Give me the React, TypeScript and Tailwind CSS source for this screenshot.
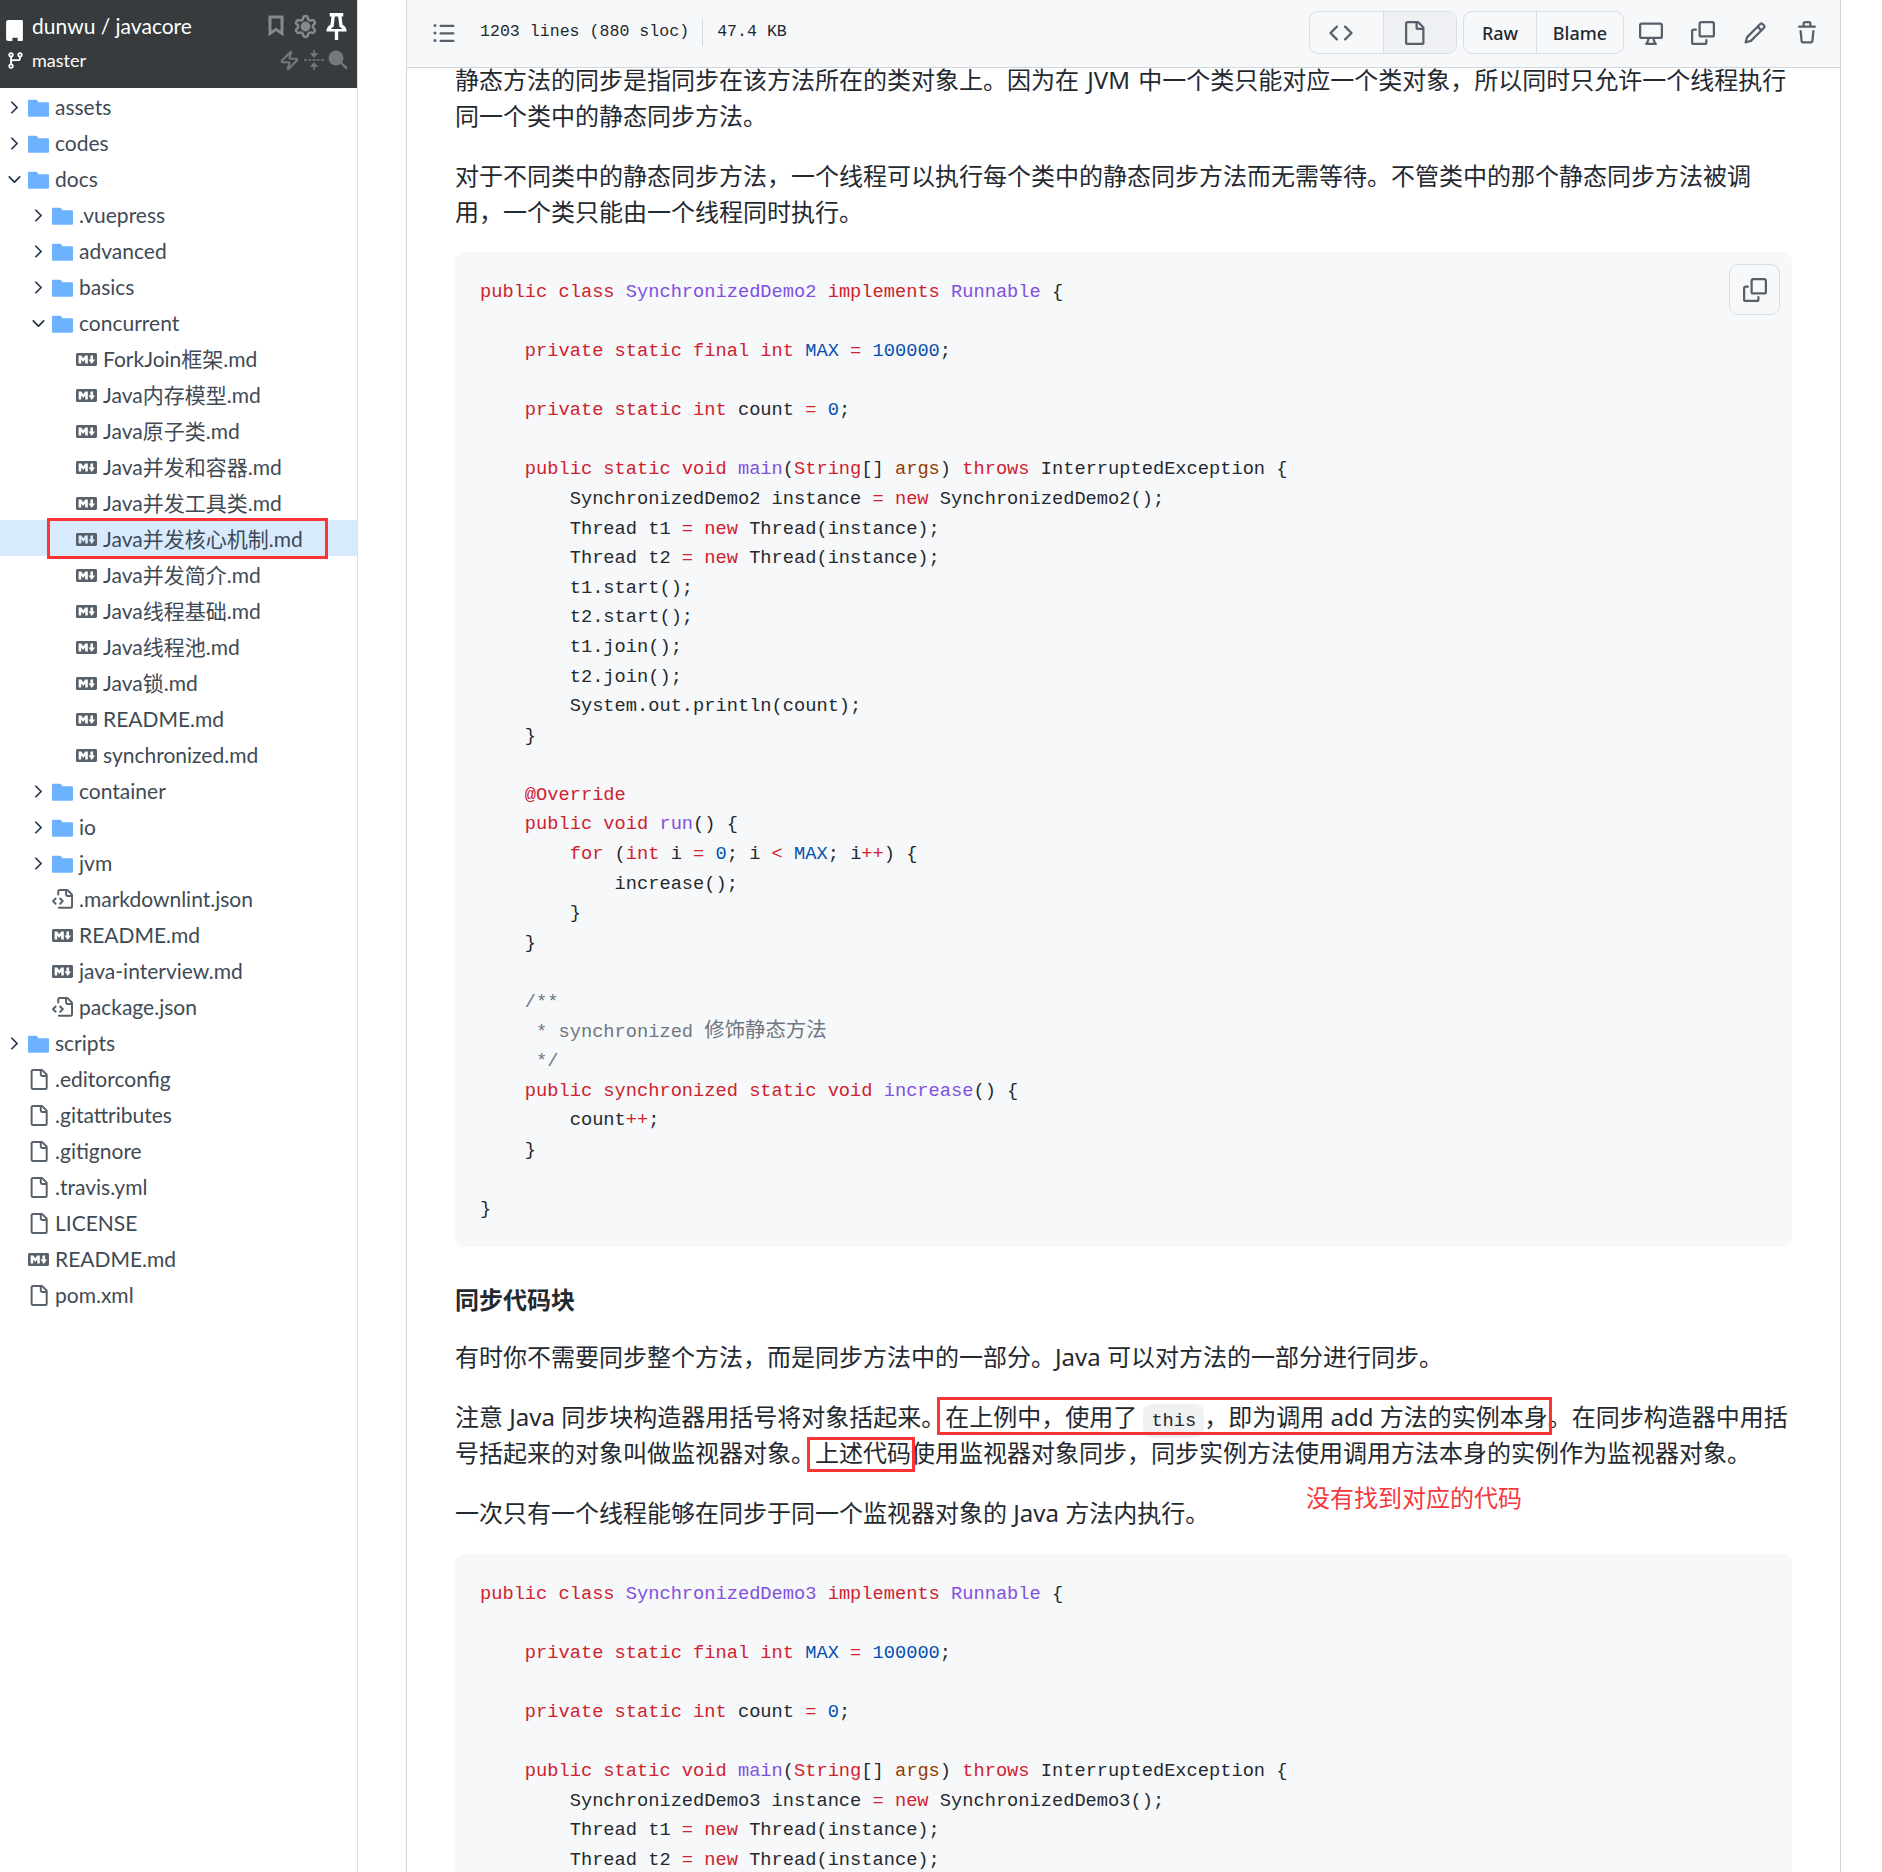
import React from "react";
import { ChevronDown, ChevronRight, Settings, Zap } from "lucide-react";

const uiFont = "font-['Noto_Sans','Noto_Sans_CJK_SC',sans-serif]";
const treeFont = "font-['Lato','Noto_Sans_CJK_SC',sans-serif]";
const monoFont = "font-['Liberation_Mono','Noto_Sans_CJK_SC',monospace]";

type Kind = "folder" | "open" | "md" | "code" | "file";

const tree: [number, Kind, string][] = [
  [0, "folder", "assets"],
  [0, "folder", "codes"],
  [0, "open", "docs"],
  [1, "folder", ".vuepress"],
  [1, "folder", "advanced"],
  [1, "folder", "basics"],
  [1, "open", "concurrent"],
  [2, "md", "ForkJoin框架.md"],
  [2, "md", "Java内存模型.md"],
  [2, "md", "Java原子类.md"],
  [2, "md", "Java并发和容器.md"],
  [2, "md", "Java并发工具类.md"],
  [2, "md", "Java并发核心机制.md"],
  [2, "md", "Java并发简介.md"],
  [2, "md", "Java线程基础.md"],
  [2, "md", "Java线程池.md"],
  [2, "md", "Java锁.md"],
  [2, "md", "README.md"],
  [2, "md", "synchronized.md"],
  [1, "folder", "container"],
  [1, "folder", "io"],
  [1, "folder", "jvm"],
  [1, "code", ".markdownlint.json"],
  [1, "md", "README.md"],
  [1, "md", "java-interview.md"],
  [1, "code", "package.json"],
  [0, "folder", "scripts"],
  [0, "file", ".editorconfig"],
  [0, "file", ".gitattributes"],
  [0, "file", ".gitignore"],
  [0, "file", ".travis.yml"],
  [0, "file", "LICENSE"],
  [0, "md", "README.md"],
  [0, "file", "pom.xml"],
];

// octicons at their 16px grid, the react-icons ones come out too thin
const icons = {
  markdown:
    "M14.85 3H1.15C.52 3 0 3.52 0 4.15v7.69C0 12.48.52 13 1.15 13h13.69c.64 0 1.15-.52 1.15-1.15v-7.7C16 3.52 15.48 3 14.85 3zM9 11H7V8L5.5 9.92 4 8v3H2V5h2l1.5 2L7 5h2v6zm2.99.5L9.5 8H11V5h2v3h1.5l-2.51 3.5z",
  folder: "M1 2h5c.7 0 1 .5 1.2 1L8 4h7c.6 0 1 .4 1 1v9c0 .6-.4 1-1 1H1c-.6 0-1-.4-1-1V3c0-.6.4-1 1-1z",
  file: "M2 1.75C2 .784 2.784 0 3.75 0h6.586c.464 0 .909.184 1.237.513l2.914 2.914c.329.328.513.773.513 1.237v9.586A1.75 1.75 0 0 1 13.25 16h-9.5A1.75 1.75 0 0 1 2 14.25Zm1.75-.25a.25.25 0 0 0-.25.25v12.5c0 .138.112.25.25.25h9.5a.25.25 0 0 0 .25-.25V6h-2.75A1.75 1.75 0 0 1 9 4.25V1.5Zm6.75.062V4.25c0 .138.112.25.25.25h2.688l-.011-.013-2.914-2.914-.013-.011Z",
  fileCode:
    "M4 1.75C4 .784 4.784 0 5.75 0h5.586c.464 0 .909.184 1.237.513l2.914 2.914c.329.328.513.773.513 1.237v8.586A1.75 1.75 0 0 1 14.25 15h-9a.75.75 0 0 1 0-1.5h9a.25.25 0 0 0 .25-.25V6h-2.75A1.75 1.75 0 0 1 10 4.25V1.5H5.75a.25.25 0 0 0-.25.25v2.5a.75.75 0 0 1-1.5 0Zm1.72 4.97a.75.75 0 0 1 1.06 0l2 2a.75.75 0 0 1 0 1.06l-2 2a.749.749 0 0 1-1.275-.326.749.749 0 0 1 .215-.734l1.47-1.47-1.47-1.47a.75.75 0 0 1 0-1.06ZM3.28 7.78 1.81 9.25l1.47 1.47a.751.751 0 0 1-.018 1.042.751.751 0 0 1-1.042.018l-2-2a.75.75 0 0 1 0-1.06l2-2a.751.751 0 0 1 1.042.018.751.751 0 0 1 .018 1.042Zm8.22-6.218V4.25c0 .138.112.25.25.25h2.688l-.011-.013-2.914-2.914-.013-.011Z",
  copy: "M0 6.75C0 5.784.784 5 1.75 5h1.5a.75.75 0 0 1 0 1.5h-1.5a.25.25 0 0 0-.25.25v7.5c0 .138.112.25.25.25h7.5a.25.25 0 0 0 .25-.25v-1.5a.75.75 0 0 1 1.5 0v1.5A1.75 1.75 0 0 1 9.25 16h-7.5A1.75 1.75 0 0 1 0 14.25ZM5 1.75C5 .784 5.784 0 6.75 0h7.5C15.216 0 16 .784 16 1.75v7.5A1.75 1.75 0 0 1 14.25 11h-7.5A1.75 1.75 0 0 1 5 9.25Zm1.75-.25a.25.25 0 0 0-.25.25v7.5c0 .138.112.25.25.25h7.5a.25.25 0 0 0 .25-.25v-7.5a.25.25 0 0 0-.25-.25Z",
  pencil:
    "M11.013 1.427a1.75 1.75 0 0 1 2.474 0l1.086 1.086a1.75 1.75 0 0 1 0 2.474l-8.61 8.61c-.21.21-.47.364-.756.445l-3.251.93a.75.75 0 0 1-.927-.928l.929-3.25c.081-.286.235-.547.445-.758l8.61-8.61Zm.176 4.823L9.75 4.81l-6.286 6.287a.253.253 0 0 0-.064.108l-.558 1.953 1.953-.558a.253.253 0 0 0 .108-.064Zm1.238-3.763a.25.25 0 0 0-.354 0L10.811 3.75l1.439 1.44 1.263-1.263a.25.25 0 0 0 0-.354Z",
  trash:
    "M11 1.75V3h2.25a.75.75 0 0 1 0 1.5H2.75a.75.75 0 0 1 0-1.5H5V1.75C5 .784 5.784 0 6.75 0h2.5C10.216 0 11 .784 11 1.75ZM4.496 6.675l.66 6.6a.25.25 0 0 0 .249.225h5.19a.25.25 0 0 0 .249-.225l.66-6.6a.75.75 0 0 1 1.492.149l-.66 6.6A1.748 1.748 0 0 1 10.595 15h-5.19a1.75 1.75 0 0 1-1.741-1.575l-.66-6.6a.75.75 0 1 1 1.492-.15ZM6.5 1.75V3h3V1.75a.25.25 0 0 0-.25-.25h-2.5a.25.25 0 0 0-.25.25Z",
  desktop:
    "M14.25 1c.966 0 1.75.784 1.75 1.75v7.5A1.75 1.75 0 0 1 14.25 12h-3.727c.099 1.041.52 1.872 1.292 2.757A.75.75 0 0 1 11.25 16h-6.5a.75.75 0 0 1-.565-1.243c.772-.885 1.192-1.716 1.292-2.757H1.75A1.75 1.75 0 0 1 0 10.25v-7.5C0 1.784.784 1 1.75 1ZM1.75 2.5a.25.25 0 0 0-.25.25v7.5c0 .138.112.25.25.25h12.5a.25.25 0 0 0 .25-.25v-7.5a.25.25 0 0 0-.25-.25ZM9.018 12H6.982a5.72 5.72 0 0 1-.765 2.5h3.566a5.72 5.72 0 0 1-.765-2.5Z",
  code: "m11.28 3.22 4.25 4.25a.75.75 0 0 1 0 1.06l-4.25 4.25a.749.749 0 0 1-1.275-.326.749.749 0 0 1 .215-.734L13.94 8l-3.72-3.72a.749.749 0 0 1 .326-1.275.749.749 0 0 1 .734.215Zm-6.56 0a.751.751 0 0 1 1.042.018.751.751 0 0 1 .018 1.042L2.06 8l3.72 3.72a.749.749 0 0 1-.326 1.275.749.749 0 0 1-.734-.215L.47 8.53a.75.75 0 0 1 0-1.06Z",
  list: "M5.75 2.5h8.5a.75.75 0 0 1 0 1.5h-8.5a.75.75 0 0 1 0-1.5Zm0 5h8.5a.75.75 0 0 1 0 1.5h-8.5a.75.75 0 0 1 0-1.5Zm0 5h8.5a.75.75 0 0 1 0 1.5h-8.5a.75.75 0 0 1 0-1.5ZM2 14a1 1 0 1 1 0-2 1 1 0 0 1 0 2Zm1-6a1 1 0 1 1-2 0 1 1 0 0 1 2 0ZM2 4a1 1 0 1 1 0-2 1 1 0 0 1 0 2Z",
  branch:
    "M9.5 3.25a2.25 2.25 0 1 1 3 2.122V6A2.5 2.5 0 0 1 10 8.5H6a1 1 0 0 0-1 1v1.128a2.251 2.251 0 1 1-1.5 0V5.372a2.25 2.25 0 1 1 1.5 0v1.836A2.493 2.493 0 0 1 6 7h4a1 1 0 0 0 1-1v-.628A2.25 2.25 0 0 1 9.5 3.25Zm-6 0a.75.75 0 1 0 1.5 0 .75.75 0 0 0-1.5 0Zm8.25-.75a.75.75 0 1 0 0 1.5.75.75 0 0 0 0-1.5ZM4.25 12a.75.75 0 1 0 0 1.5.75.75 0 0 0 0-1.5Z",
  bookmark: "M3 1h10v14l-5-3.6L3 15zM5 3v8.2l3-2.2 3 2.2V3z",
  pin: "M4 0h8v2h-1l.6 5c1.3.7 2.4 2 2.4 4H9v5H7v-5H2c0-2 1.1-3.3 2.4-4L5 2H4zM7 2l-.7 6.2C5.500 8.600 5 9 4.700 9.500h6.600C11 9 10.500 8.600 9.700 8.200L9 2z",
};

const Oct = ({ d, size = 24, className = "" }: { d: string; size?: number; className?: string }) => (
  <svg viewBox="0 0 16 16" width={size} height={size} fill="currentColor" fillRule="evenodd" className={`shrink-0 ${className}`}>
    <path d={d} />
  </svg>
);

const TreeRow = ({ depth, kind, name }: { depth: number; kind: Kind; name: string }) => {
  const selected = name === "Java并发核心机制.md";
  const pad = depth === 0 ? "pl-0" : depth === 1 ? "pl-[24px]" : "pl-[48px]";
  return (
    <div className={`flex items-center h-9 pt-[3px] text-[21px] text-[#404a55] ${pad} ${selected ? "bg-[#d8ebfe]" : ""}`}>
      <span className="w-[28px] pl-[4px] flex items-center shrink-0 text-[#24364d]">
        {kind === "folder" && <ChevronRight size={21} strokeWidth={2} />}
        {kind === "open" && <ChevronDown size={21} strokeWidth={2} />}
      </span>
      <span className="w-[27px] flex items-center shrink-0">
        {(kind === "folder" || kind === "open") && <Oct d={icons.folder} size={21} className="text-[#6cb2ff]" />}
        {kind === "md" && <Oct d={icons.markdown} size={21} className="text-[#586069]" />}
        {kind === "code" && <Oct d={icons.fileCode} size={21} className="text-[#586069]" />}
        {kind === "file" && <Oct d={icons.file} size={21} className="text-[#586069]" />}
      </span>
      <span className="whitespace-nowrap mb-[2px]">{name}</span>
    </div>
  );
};

const Sidebar = () => (
  <aside className={`w-[358px] shrink-0 border-r border-[#dde1e5] bg-white ${treeFont}`}>
    <div className="h-[88px] bg-[#373b3e] text-white">
      <div className="flex items-center h-[48px] pt-[4px] pl-[6px]">
        <svg viewBox="0 0 16 20" className="w-[17px] h-[21px] mt-[8px]" fill="#fff">
          <path d="M2 0h13a1 1 0 0 1 1 1v18a1 1 0 0 1-1 1h-4v-3H6v3H2a2 2 0 0 1-2-2V2a2 2 0 0 1 2-2z" />
        </svg>
        <span className="ml-[9px] text-[21px] whitespace-nowrap">dunwu / javacore</span>
        <div className="ml-auto mr-[7px] flex items-center gap-[5px]">
          <Oct d={icons.bookmark} size={24} className="text-[#85898c]" />
          <Settings size={25} strokeWidth={2.4} className="text-[#85898c]">
            <circle cx="12" cy="12" r="3.5" fill="currentColor" />
          </Settings>
          <Oct d={icons.pin} size={27} className="text-white" />
        </div>
      </div>
      <div className="flex items-center h-[24px] pl-[6px]">
        <Oct d={icons.branch} size={19} />
        <span className="ml-[7px] text-[18px] whitespace-nowrap">master</span>
        <div className="ml-auto mr-[9px] flex items-center gap-[4px] text-[#74787b]">
          <Zap size={21} strokeWidth={2.4} />
          <svg viewBox="0 0 20 20" className="w-5 h-5" fill="currentColor">
            <path d="M9.200 0h1.600v3H14l-4 5-4-5h3.200zM6 17l4-5 4 5h-3.200v3H9.200v-3zM0 9.300h3v1.400H0zM4.500 9.300h3v1.400h-3zM8.500 9.300h3v1.400h-3zM12.500 9.300h3v1.400h-3zM17 9.300h3v1.400h-3z" />
          </svg>
          <svg viewBox="0 0 20 20" className="w-5 h-5" fill="currentColor">
            <circle cx="8" cy="8" r="7.500" />
            <path d="M12.500 11l7.500 6.500-2 2-7-7z" />
          </svg>
        </div>
      </div>
    </div>
    {tree.map(([depth, kind, name], i) => (
      <TreeRow key={i} depth={depth} kind={kind} name={name} />
    ))}
  </aside>
);

type Token = [string, string?];
const r = "text-[#cf222e]";
const p = "text-[#8250df]";
const b = "text-[#0550ae]";
const o = "text-[#953800]";
const g = "text-[#6e7781]";
const gc = "text-[#6e7781] text-[20.4px]";

const codeLines = (demo: string): Token[][] => [
  [["public class ", r], [demo, p], [" implements ", r], ["Runnable", p], [" {"]],
  [],
  [["    private static final int ", r], ["MAX", b], [" "], ["=", r], [" "], ["100000", b], [";"]],
  [],
  [["    private static int ", r], ["count "], ["=", r], [" "], ["0", b], [";"]],
  [],
  [["    public static void ", r], ["main", p], ["("], ["String", r], ["[] "], ["args", o], [") "], ["throws ", r], ["InterruptedException {"]],
  [["        " + demo + " instance "], ["= new ", r], [demo + "();"]],
  [["        Thread t1 "], ["= new ", r], ["Thread(instance);"]],
  [["        Thread t2 "], ["= new ", r], ["Thread(instance);"]],
  [["        t1.start();"]],
  [["        t2.start();"]],
  [["        t1.join();"]],
  [["        t2.join();"]],
  [["        System.out.println(count);"]],
  [["    }"]],
  [],
  [["    @Override", r]],
  [["    public void ", r], ["run", p], ["() {"]],
  [["        for", r], [" ("], ["int ", r], ["i "], ["=", r], [" "], ["0", b], ["; i "], ["<", r], [" "], ["MAX", b], ["; i"], ["++", r], [") {"]],
  [["            increase();"]],
  [["        }"]],
  [["    }"]],
  [],
  [["    /**", g]],
  [["     * synchronized ", g], ["修饰静态方法", gc]],
  [["     */", g]],
  [["    public synchronized static void ", r], ["increase", p], ["() {"]],
  [["        count"], ["++", r], [";"]],
  [["    }"]],
  [],
  [["}"]],
];

const CodeBlock = ({ demo, copy }: { demo: string; copy?: boolean }) => (
  <div className={`relative bg-[#f6f8fa] rounded-[9px] pt-[26px] pb-[22px] px-6 mb-6 ${monoFont}`}>
    {copy && (
      <div className="absolute top-3 right-3 w-[51px] h-[51px] flex items-center justify-center rounded-[9px] border border-[#d8dee4] bg-[#f6f8fa] text-[#57606a]">
        <Oct d={icons.copy} />
      </div>
    )}
    <pre className="text-[18.7px] leading-[29.58px] text-[#24292f] font-[inherit] pl-px">
      {codeLines(demo).map((line, i) => (
        <div key={i} className="h-[29.58px]">
          {line.map(([text, color], j) => (
            <span key={j} className={color}>
              {text}
            </span>
          ))}
        </div>
      ))}
    </pre>
  </div>
);

const Toolbar = () => (
  <div className="absolute top-0 left-0 right-0 h-[68px] z-10 bg-[#f6f8fa] border-b border-[#d0d7de] flex items-center pb-[2px] text-[#24292f]">
    <Oct d={icons.list} className="ml-[25px] text-[#57606a]" />
    <span className={`ml-[24px] text-[16.6px] ${monoFont}`}>1203 lines (880 sloc)</span>
    <span className="ml-[13px] mr-[14px] w-px h-[27px] bg-[#d0d7de]" />
    <span className={`text-[16.6px] ${monoFont}`}>47.4 KB</span>
    <div className="ml-auto flex items-center">
      <div className="flex h-[43px] w-[148px] rounded-[9px] border border-[#d8dee4] overflow-hidden">
        <div className="w-[73px] pr-[11px] flex items-center justify-center text-[#57606a]">
          <Oct d={icons.code} />
        </div>
        <div className="flex-1 pr-[12px] flex items-center justify-center bg-[#eef0f3] border-l border-[#d8dee4] text-[#57606a]">
          <Oct d={icons.file} />
        </div>
      </div>
      <div className="flex h-[43px] w-[161px] ml-[6px] rounded-[9px] border border-[#d8dee4] text-[18px] font-medium overflow-hidden">
        <div className="w-[72px] pt-[2px] flex items-center justify-center">Raw</div>
        <div className="flex-1 pt-[2px] flex items-center justify-center border-l border-[#d8dee4]">Blame</div>
      </div>
      <div className="flex items-center gap-[28px] ml-[15px] mr-[21px] text-[#57606a]">
        <Oct d={icons.desktop} />
        <Oct d={icons.copy} />
        <Oct d={icons.pencil} />
        <Oct d={icons.trash} />
      </div>
    </div>
  </div>
);

export default function App() {
  return (
    <div className={`relative flex h-[1872px] overflow-hidden bg-white ${uiFont}`}>
      <Sidebar />
      <main className="relative ml-[48px] w-[1435px] shrink-0 border-x border-[#d0d7de] h-full overflow-hidden">
        <Toolbar />
        <article className="px-[48px] pt-[60px] text-[24px] leading-[36px] text-[#24292f]">
          <p className="pt-[2px] mb-[22px] [word-spacing:2px]">
            静态方法的同步是指同步在该方法所在的类对象上。因为在 JVM 中一个类只能对应一个类对象，所以同时只允许一个线程执行同一个类中的静态同步方法。
          </p>
          <p className="pt-[2px] mb-[22px]">
            对于不同类中的静态同步方法，一个线程可以执行每个类中的静态同步方法而无需等待。不管类中的那个静态同步方法被调用，一个类只能由一个线程同时执行。
          </p>
          <CodeBlock demo="SynchronizedDemo2" copy />
          <h4 className="mt-9 pt-[2px] mb-[22px] font-bold leading-[30px]">同步代码块</h4>
          <p className="pt-[2px] mb-[22px]">有时你不需要同步整个方法，而是同步方法中的一部分。Java 可以对方法的一部分进行同步。</p>
          <p className="pt-[2px] mb-[22px]">
            注意 Java 同步块构造器用括号将对象括起来。在上例中，使用了{" "}
            <code className={`bg-[#eff1f3] rounded-[9px] px-[8px] py-[6px] text-[18.7px] leading-none ${monoFont}`}>this</code>
            ，即为调用 add 方法的实例本身。在同步构造器中用括号括起来的对象叫做监视器对象。上述代码使用监视器对象同步，同步实例方法使用调用方法本身的实例作为监视器对象。
          </p>
          <p className="pt-[2px] mb-[23px]">一次只有一个线程能够在同步于同一个监视器对象的 Java 方法内执行。</p>
          <CodeBlock demo="SynchronizedDemo3" />
        </article>
      </main>

      {/* annotations drawn on top of the screenshot */}
      <div className="absolute left-[47px] top-[518px] w-[281px] h-[41px] border-[3px] border-[#f33]" />
      <div className="absolute left-[937px] top-[1397px] w-[615px] h-[38px] border-[3px] border-[#f33]" />
      <div className="absolute left-[807px] top-[1437px] w-[108px] h-[35px] border-[3px] border-[#f33]" />
      <div className="absolute left-[1306px] top-[1480px] text-[24px] leading-[36px] text-[#f5383c]">没有找到对应的代码</div>
    </div>
  );
}
